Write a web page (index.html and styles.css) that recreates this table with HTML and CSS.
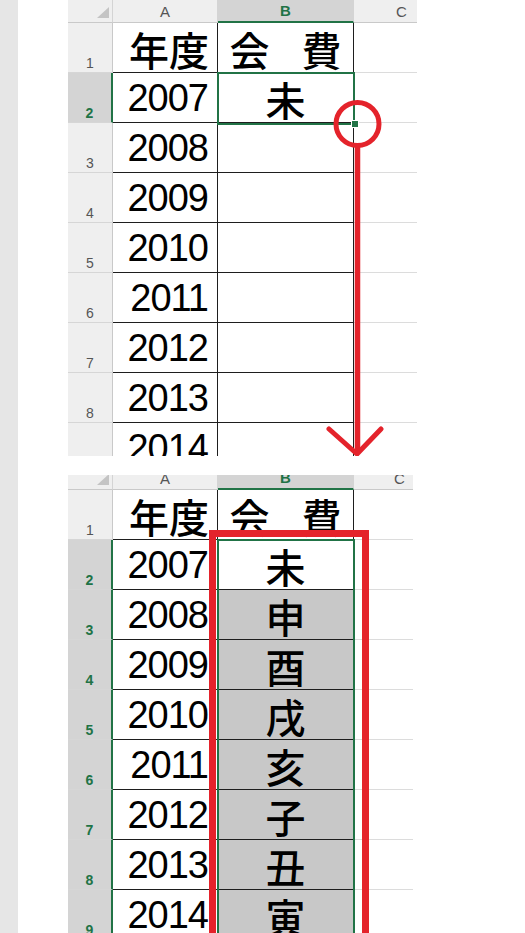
FILE: index.html
```html
<!DOCTYPE html>
<html lang="ja">
<head>
<meta charset="utf-8">
<title>干支の連続データ</title>
<link rel="stylesheet" href="styles.css">
</head>
<body>
<div class="page">
  <div class="strip"></div>
  <main class="content">
    <section class="sheet sheet-top">
      <div class="grid">
        <div class="corner"><span class="tri"></span></div>
        <div class="ch">A</div>
        <div class="ch sel">B</div>
        <div class="ch c">C</div>

        <div class="rh">1</div>
        <div class="ca"><span class="kj">年度</span></div>
        <div class="cb title"><span class="kj">会</span><span class="kj">費</span></div>
        <div class="cc"></div>

        <div class="rh sel">2</div>
        <div class="ca"><span class="num">2007</span></div>
        <div class="cb"><span class="kj">未</span></div>
        <div class="cc"></div>

        <div class="rh">3</div>
        <div class="ca"><span class="num">2008</span></div>
        <div class="cb"></div>
        <div class="cc"></div>

        <div class="rh">4</div>
        <div class="ca"><span class="num">2009</span></div>
        <div class="cb"></div>
        <div class="cc"></div>

        <div class="rh">5</div>
        <div class="ca"><span class="num">2010</span></div>
        <div class="cb"></div>
        <div class="cc"></div>

        <div class="rh">6</div>
        <div class="ca"><span class="num">2011</span></div>
        <div class="cb"></div>
        <div class="cc"></div>

        <div class="rh">7</div>
        <div class="ca"><span class="num">2012</span></div>
        <div class="cb"></div>
        <div class="cc"></div>

        <div class="rh">8</div>
        <div class="ca"><span class="num">2013</span></div>
        <div class="cb"></div>
        <div class="cc"></div>

        <div class="rh">9</div>
        <div class="ca"><span class="num">2014</span></div>
        <div class="cb"></div>
        <div class="cc"></div>
      </div>
      <div class="active"></div>
      <div class="handle"></div>
      <svg class="annot" width="349" height="456" viewBox="0 0 349 456">
        <circle cx="289.5" cy="124" r="21.5" fill="none" stroke="#e4232b" stroke-width="5"/>
        <line x1="289.5" y1="146" x2="289.5" y2="452" stroke="#e4232b" stroke-width="5.5"/>
        <polyline points="261,429 289,454 313,429" fill="none" stroke="#e4232b" stroke-width="5" stroke-linecap="round" stroke-linejoin="round"/>
      </svg>
    </section>

    <section class="sheet sheet-bottom">
      <div class="grid">
        <div class="corner"><span class="tri"></span></div>
        <div class="ch">A</div>
        <div class="ch sel">B</div>
        <div class="ch c">C</div>

        <div class="rh">1</div>
        <div class="ca"><span class="kj">年度</span></div>
        <div class="cb title"><span class="kj">会</span><span class="kj">費</span></div>
        <div class="cc"></div>

        <div class="rh sel">2</div>
        <div class="ca"><span class="num">2007</span></div>
        <div class="cb"><span class="kj">未</span></div>
        <div class="cc"></div>

        <div class="rh sel">3</div>
        <div class="ca"><span class="num">2008</span></div>
        <div class="cb fill"><span class="kj">申</span></div>
        <div class="cc"></div>

        <div class="rh sel">4</div>
        <div class="ca"><span class="num">2009</span></div>
        <div class="cb fill"><span class="kj">酉</span></div>
        <div class="cc"></div>

        <div class="rh sel">5</div>
        <div class="ca"><span class="num">2010</span></div>
        <div class="cb fill"><span class="kj">戌</span></div>
        <div class="cc"></div>

        <div class="rh sel">6</div>
        <div class="ca"><span class="num">2011</span></div>
        <div class="cb fill"><span class="kj">亥</span></div>
        <div class="cc"></div>

        <div class="rh sel">7</div>
        <div class="ca"><span class="num">2012</span></div>
        <div class="cb fill"><span class="kj">子</span></div>
        <div class="cc"></div>

        <div class="rh sel">8</div>
        <div class="ca"><span class="num">2013</span></div>
        <div class="cb fill"><span class="kj">丑</span></div>
        <div class="cc"></div>

        <div class="rh sel">9</div>
        <div class="ca"><span class="num">2014</span></div>
        <div class="cb fill"><span class="kj">寅</span></div>
        <div class="cc"></div>
      </div>
      <div class="range"></div>
      <div class="redframe"></div>
    </section>
  </main>
</div>
</body>
</html>
```

FILE: styles.css
```css
* { box-sizing: border-box; }
html, body { margin: 0; padding: 0; background: #fff; overflow: hidden; }

.page { display: flex; width: 525px; height: 933px; }
.strip { flex: none; width: 18px; background: #e6e6e6; }
.content { display: flex; flex-direction: column; gap: 19px; padding-left: 50px; }

.sheet { position: relative; overflow: hidden; }
.sheet-top { width: 349px; height: 456px; }
.sheet-bottom { width: 345px; height: 458px; }

.grid { display: grid; }
.sheet-top .grid { grid-template-columns: 45px 105px 136px 63px; grid-template-rows: 23px repeat(9, 50px); }
.sheet-bottom .grid { grid-template-columns: 45px 105px 136px 59px; grid-template-rows: 15px repeat(9, 50px); }

/* headers */
.corner, .ch {
  background: #efefef;
  border-bottom: 1px solid #c9c9c9;
  border-right: 1px solid #d4d4d4;
  overflow: hidden;
  display: flex;
  align-items: flex-end;
  justify-content: center;
  font: 15px/16px "Liberation Sans", Arial, sans-serif;
  color: #555;
  padding-bottom: 2px;
}
.corner { justify-content: flex-end; padding: 0 3px 4px 0; }
.tri { display: block; flex: none; width: 12px; height: 11px; background: #c4c4c4; clip-path: polygon(100% 0, 100% 100%, 0 100%); }
.ch.sel { background: #d4d4d4; color: #217346; font-weight: bold; border-bottom: 2px solid #217346; }
.ch.c { padding-left: 32px; border-right: none; }

.rh {
  background: #efefef;
  border-bottom: 1px solid #d6d6d6;
  border-right: 1px solid #c9c9c9;
  display: flex;
  align-items: flex-end;
  justify-content: center;
  font: 14px/16px "Liberation Sans", Arial, sans-serif;
  color: #555;
  padding-bottom: 1px;
}
.rh.sel { background: #d4d4d4; color: #217346; font-weight: bold; border-right: 2px solid #217346; }

/* cells */
.ca, .cb {
  border-bottom: 1px solid #1e1e1e;
  border-right: 1px solid #1e1e1e;
  display: flex;
  align-items: flex-end;
  color: #000;
}
.ca { justify-content: flex-end; padding-right: 8px; }
.cb { justify-content: center; }
.cb.title { gap: 32px; }
.cb.fill { background: #c8c8c8; }
.cc { border-bottom: 1px solid #dcdcdc; }

.num { font: 38px/1.12 "Liberation Sans", Arial, sans-serif; letter-spacing: -1px; padding-bottom: 2px; margin-right: 1px; }
.kj { font-family: "Noto Sans CJK JP", "Noto Sans CJK SC", sans-serif; font-size: 40px; line-height: 40px; font-weight: 500; padding-bottom: 3px; }

/* overlays */
.active { position: absolute; left: 149px; top: 72px; width: 138px; height: 53px; border: 2px solid #217346; }
.handle { position: absolute; left: 283px; top: 120px; width: 8px; height: 8px; background: #217346; border: 1px solid #fff; }
.annot { position: absolute; left: 0; top: 0; }

.range { position: absolute; left: 149px; top: 64px; width: 138px; height: 420px; border: 2px solid #217346; }
.redframe { position: absolute; left: 141px; top: 55px; width: 160px; height: 440px; border: 7px solid #e4232b; }
```
